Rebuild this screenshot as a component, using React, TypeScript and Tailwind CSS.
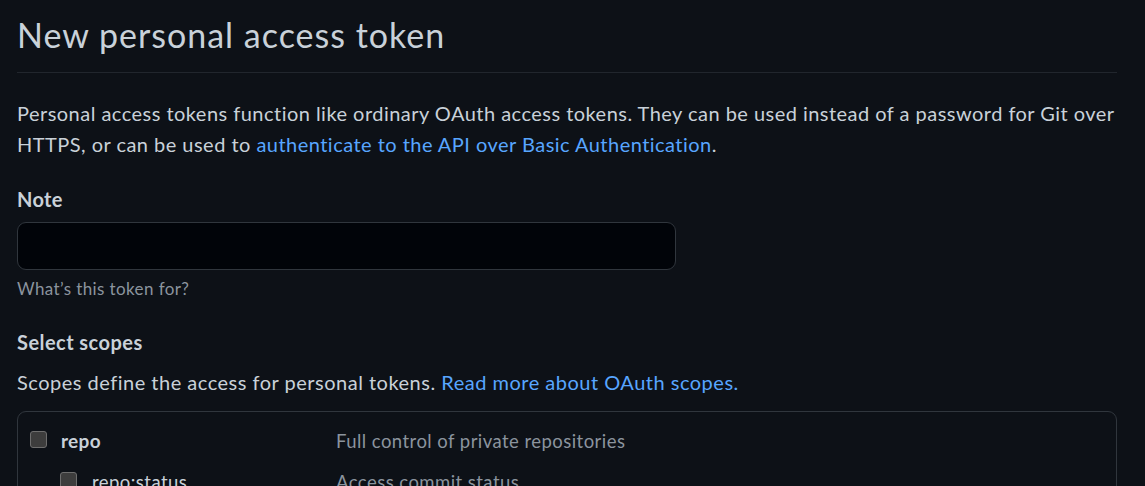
import React from "react";

function Checkbox() {
  return (
    <span className="inline-block h-[17px] w-[17px] shrink-0 rounded-[3px] border border-[#6e6e6e] bg-[#3d3d3d]" />
  );
}

interface ScopeRowProps {
  name: string;
  description: string;
  bold?: boolean;
  indent?: boolean;
}

function ScopeRow({ name, description, bold, indent }: ScopeRowProps) {
  return (
    <div className="flex items-start">
      <div
        className={
          indent
            ? "flex w-[306px] items-start gap-[15px] pl-[30px]"
            : "flex w-[306px] items-start gap-[14px]"
        }
      >
        <span className="mt-[1px]">
          <Checkbox />
        </span>
        <span
          className={
            bold
              ? "text-[19px] font-bold leading-[24px] tracking-[0.3px] text-[#c9d1d9]"
              : "text-[18.5px] leading-[24px] tracking-[0.45px] text-[#c9d1d9]"
          }
        >
          {name}
        </span>
      </div>
      <span className="text-[18.5px] leading-[24px] tracking-[0.45px] text-[#8b949e]">
        {description}
      </span>
    </div>
  );
}

export default function App() {
  return (
    <div className="h-screen overflow-hidden bg-[#0d1117] font-['Lato','Noto_Sans',sans-serif] text-[#c9d1d9]">
      <div className="pl-[17px] pr-[28px]">
        <div className="border-b border-[#21262d] pb-[13px] pt-[11px]">
          <h1 className="text-[34px] font-normal leading-[48px] tracking-[1px] text-[#c9d1d9]">
            New personal access token
          </h1>
        </div>

        <p className="mt-[25px] text-[20px] leading-[31px] tracking-[0.47px]">
          Personal access tokens function like ordinary OAuth access tokens.
          They can be used instead of a password for Git over
          <br />
          HTTPS, or can be used to{" "}
          <a href="#" className="text-[#58a6ff]">
            authenticate to the API over Basic Authentication
          </a>
          .
        </p>

        <label className="mt-[24px] block text-[20px] font-bold leading-[30px] tracking-[0.3px]">
          Note
        </label>
        <input
          type="text"
          className="mt-[8px] block h-[48px] w-[659px] rounded-[9px] border border-[#30363d] bg-[#010409] px-3 text-[20px] text-[#c9d1d9] outline-none"
        />
        <p className="mt-[7px] text-[17px] leading-[24px] tracking-[0.4px] text-[#8b949e]">
          What’s this token for?
        </p>

        <h2 className="mt-[26px] text-[20px] font-bold leading-[30px] tracking-[0.45px]">
          Select scopes
        </h2>
        <p className="mt-[10px] text-[20px] leading-[30px] tracking-[0.5px]">
          Scopes define the access for personal tokens.{" "}
          <a href="#" className="text-[#58a6ff]">
            Read more about OAuth scopes.
          </a>
        </p>

        <div className="mt-[14px] flex flex-col gap-[16px] rounded-[9px] border border-[#30363d] px-[12px] pb-[20px] pt-[17px]">
          <ScopeRow name="repo" description="Full control of private repositories" bold />
          <ScopeRow name="repo:status" description="Access commit status" indent />
        </div>
      </div>
    </div>
  );
}
